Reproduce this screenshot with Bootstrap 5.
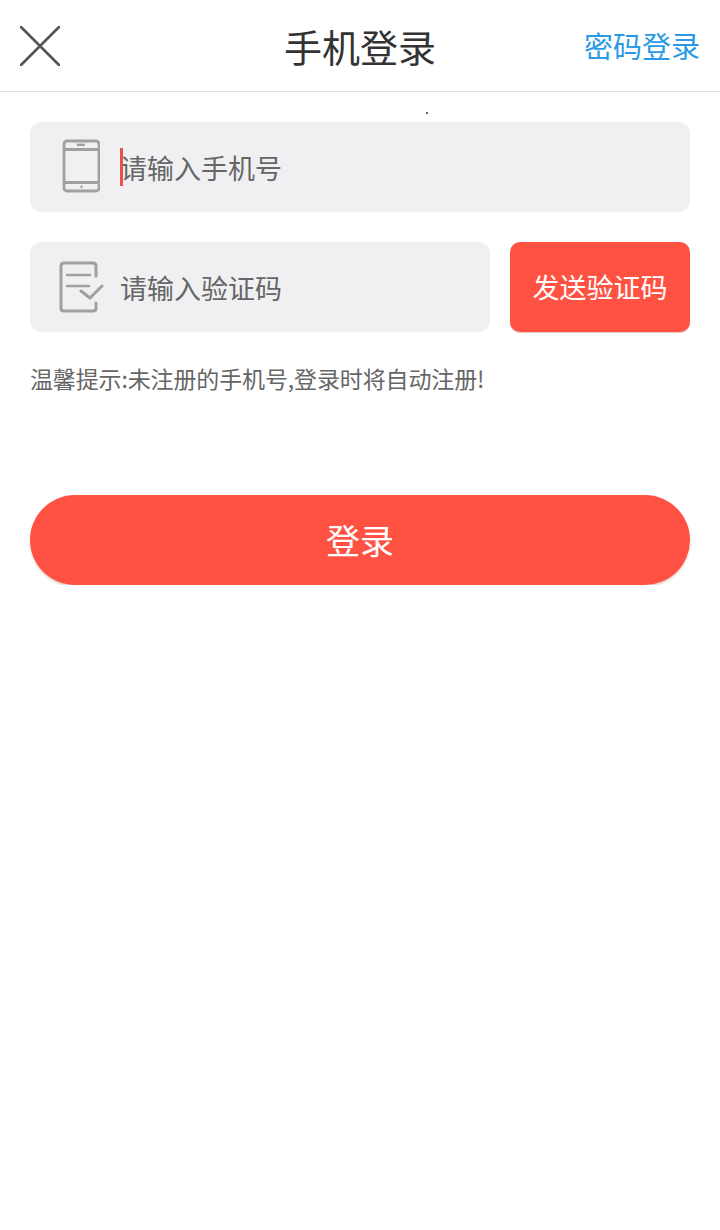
<!DOCTYPE html>
<html lang="zh-CN">
<head>
    <meta charset="UTF-8">
    <meta name="viewport" content="width=device-width, initial-scale=1.0">
    <title>手机登录</title>
    <link href="https://cdn.jsdelivr.net/npm/bootstrap@5.3.0/dist/css/bootstrap.min.css" rel="stylesheet">
    <style>
        body {
            background: #fff;
            font-family: "Noto Sans CJK SC", "Liberation Sans", sans-serif;
            color: #666;
        }
        .top-bar {
            height: 92px;
            border-bottom: 1px solid #e0e0e0;
            padding: 0 20px;
        }
        .top-title {
            font-size: 38px;
            color: #333;
            line-height: 1;
            left: 0;
            right: 0;
            top: 27px;
            pointer-events: none;
        }
        .top-link {
            font-size: 29px;
            color: #2a9ae6;
            text-decoration: none;
            line-height: 1;
        }
        .form-wrap {
            padding: 30px 30px 0;
        }
        .code-row {
            margin-top: 30px;
            gap: 20px;
        }
        .field-box {
            height: 90px;
            background: #f0f0f3;
            border-radius: 12px;
        }
        .phone-icon {
            width: 90px;
            padding-left: 32px;
            padding-bottom: 2px;
        }
        .code-icon {
            width: 90px;
            padding-left: 28px;
        }
        .caret-line {
            width: 3px;
            height: 38px;
            background: #e8504a;
            left: 90px;
            top: 26px;
        }
        .field-text {
            font-size: 27px;
            line-height: 1;
            color: #666;
        }
        .send-btn {
            width: 180px;
            height: 90px;
            background: #ff5242;
            border: 0;
            border-radius: 10px;
            color: #fff;
            font-size: 27px;
            padding: 0;
            box-shadow: 0 1px 1px rgba(150, 60, 50, .3);
        }
        .tip-text {
            font-size: 23px;
            line-height: 1;
            letter-spacing: -0.13px;
            color: #666;
            margin: 35px 0 0;
        }
        .login-btn {
            height: 90px;
            background: #ff5242;
            border: 0;
            border-radius: 45px;
            color: #fff;
            font-size: 34px;
            margin-top: 105px;
            padding: 0 0 2px;
            box-shadow: 0 2px 2px rgba(150, 90, 60, .25);
        }
        .speck {
            width: 2px;
            height: 2px;
            background: #333;
            border-radius: 50%;
            left: 426px;
            top: 112px;
        }
    </style>
</head>
<body>
    <div class="top-bar position-relative d-flex align-items-center justify-content-between">
        <svg width="40" height="40" viewBox="0 0 40 40" fill="none" stroke="#555" stroke-width="2.6" stroke-linecap="round">
            <path d="M1 1L39 39M39 1L1 39"/>
        </svg>
        <div class="top-title position-absolute text-center">手机登录</div>
        <a class="top-link" href="#">密码登录</a>
    </div>
    <div class="speck position-absolute"></div>

    <div class="form-wrap d-flex flex-column">
        <div class="field-box position-relative d-flex align-items-center">
            <div class="phone-icon d-flex">
                <svg width="38" height="54" viewBox="0 0 38 54" fill="none" stroke="#a0a0a0" stroke-width="2.8" stroke-linejoin="round">
                    <rect x="2" y="2" width="35" height="50" rx="3"/>
                    <path d="M2 10.5H37M2 43.5H37"/>
                    <path d="M15 5.8H23" stroke-width="2.4"/>
                    <path d="M18.5 47.8H20.5" stroke-width="2.6"/>
                </svg>
            </div>
            <span class="caret-line position-absolute"></span>
            <span class="field-text">请输入手机号</span>
        </div>

        <div class="code-row d-flex">
            <div class="field-box position-relative d-flex align-items-center flex-grow-1">
                <div class="code-icon d-flex">
                    <svg width="46" height="52" viewBox="0 0 46 52" fill="none" stroke="#a0a0a0" stroke-width="3" stroke-linecap="round" stroke-linejoin="round">
                        <path d="M38 15V5C38 3 37 2 35 2H6C4 2 3 3 3 5V47C3 49 4 50 6 50H35C37 50 38 49 38 47V42"/>
                        <path d="M9 14H32M9 25H31" stroke-width="2.6"/>
                        <path d="M23 30L32 37L44 25"/>
                    </svg>
                </div>
                <span class="field-text">请输入验证码</span>
            </div>
            <button class="send-btn btn flex-shrink-0" type="button">发送验证码</button>
        </div>

        <p class="tip-text">温馨提示:未注册的手机号,登录时将自动注册!</p>

        <button class="login-btn btn w-100" type="button">登录</button>
    </div>

    <script src="https://cdn.jsdelivr.net/npm/bootstrap@5.3.0/dist/js/bootstrap.bundle.min.js"></script>
</body>
</html>
